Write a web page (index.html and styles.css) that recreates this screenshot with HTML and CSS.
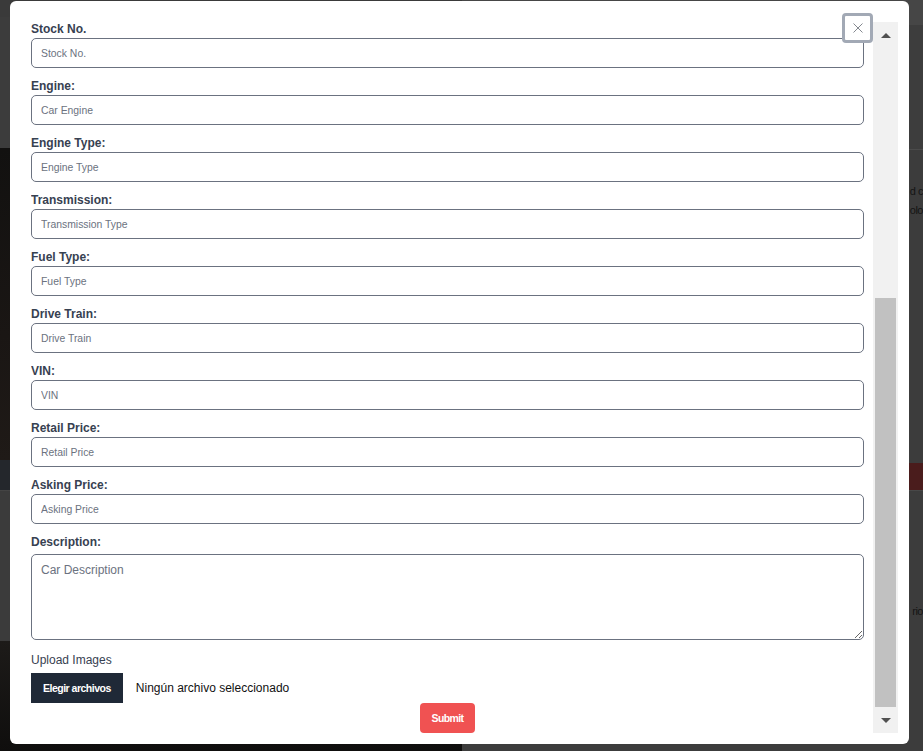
FILE: index.html
```html
<!DOCTYPE html>
<html lang="en">
<head>
<meta charset="utf-8">
<title>Add Car</title>
<link rel="stylesheet" href="styles.css">
</head>
<body>
<div class="page">
  <div class="col-left">
    <div class="l-top"></div>
    <div class="l-photo"></div>
    <div class="l-band"></div>
    <div class="l-grey"></div>
    <div class="l-photo2"></div>
  </div>
  <div class="col-right">
    <div class="r-top"></div>
    <div class="r-nav"></div>
    <div class="r-text">
      <p>d c</p>
      <p>olo</p>
    </div>
    <div class="r-red"></div>
    <div class="r-rest">
      <p>rio</p>
    </div>
  </div>
</div>

<div class="modal">
  <form class="form">
    <div class="field"><label>Stock No.</label><input type="text" placeholder="Stock No."></div>
    <div class="field"><label>Engine:</label><input type="text" placeholder="Car Engine"></div>
    <div class="field"><label>Engine Type:</label><input type="text" placeholder="Engine Type"></div>
    <div class="field"><label>Transmission:</label><input type="text" placeholder="Transmission Type"></div>
    <div class="field"><label>Fuel Type:</label><input type="text" placeholder="Fuel Type"></div>
    <div class="field"><label>Drive Train:</label><input type="text" placeholder="Drive Train"></div>
    <div class="field"><label>VIN:</label><input type="text" placeholder="VIN"></div>
    <div class="field"><label>Retail Price:</label><input type="text" placeholder="Retail Price"></div>
    <div class="field"><label>Asking Price:</label><input type="text" placeholder="Asking Price"></div>
    <div class="field field-desc"><label>Description:</label><textarea placeholder="Car Description"></textarea></div>
    <div class="upload">
      <span class="upload-label">Upload Images</span>
      <div class="file-row">
        <span class="file-btn">Elegir archivos</span>
        <span class="file-name">Ningún archivo seleccionado</span>
      </div>
    </div>
    <div class="actions"><button type="button" class="submit">Submit</button></div>
  </form>
  <div class="scrollbar">
    <div class="sb-arrow sb-up"></div>
    <div class="sb-track"><div class="sb-thumb"></div></div>
    <div class="sb-arrow sb-down"></div>
  </div>
  <button type="button" class="close" aria-label="Close">
    <svg width="10" height="10" viewBox="0 0 10 10"><path d="M0.5 0.5 L9.5 9.5 M9.5 0.5 L0.5 9.5" stroke="#84888f" stroke-width="1" fill="none"/></svg>
  </button>
</div>
</body>
</html>
```

FILE: styles.css
```css
html, body {
  margin: 0;
  padding: 0;
  height: 751px;
  overflow: hidden;
}

body {
  font-family: "Liberation Sans", Arial, sans-serif;
  background: #3d3d3d;
}

/* ---- dimmed page behind the modal ---- */
.page {
  display: grid;
  grid-template-columns: 1fr 1fr;
  height: 751px;
  overflow: hidden;
}

.col-left, .col-right {
  display: flex;
  flex-direction: column;
  overflow: hidden;
}

.l-top {
  height: 148px;
  background: #3c3c3c;
  box-sizing: border-box;
  border-top: 17px solid #3a3a3a;
}
.l-photo {
  height: 312px;
  background: linear-gradient(180deg, #121110 0%, #1a1614 60%, #1f1a17 100%);
}
.l-band {
  height: 30px;
  background: #24272c;
}
.l-grey {
  height: 150px;
  background: #3b3b3b;
  border-top: 1px solid #444;
}
.l-photo2 {
  flex: 1;
  background: linear-gradient(180deg, #1d1b19 0%, #0f0e0d 100%);
}

.r-top {
  height: 25px;
  background: #464646;
}
.r-nav {
  height: 124px;
  background: #3d3d3d;
  border-bottom: 1px solid #4b4b4b;
}
.r-text {
  height: 313px;
  background: #3c3c3c;
  padding-top: 32px;
  box-sizing: border-box;
}
.r-text p, .r-rest p {
  margin: 0;
  text-align: right;
  white-space: nowrap;
  font-size: 11px;
  line-height: 19px;
  letter-spacing: -0.5px;
  color: #141414;
}
.r-red {
  height: 27px;
  background: #4a1c1c;
}
.r-rest {
  flex: 1;
  background: #3c3c3c;
  border-top: 1px solid #484848;
  padding-top: 111px;
  box-sizing: border-box;
}

/* ---- modal ---- */
.modal {
  position: absolute;
  left: 10px;
  top: 1px;
  width: 899px;
  height: 743px;
  box-sizing: border-box;
  padding: 21px 11px 11px 21px;
  background: #fff;
  border-radius: 6px;
  display: flex;
  gap: 9px;
}

.form {
  flex: 1;
  display: flex;
  flex-direction: column;
  overflow: hidden;
  margin: 0;
}

.field {
  margin-bottom: 11px;
}

.field label {
  display: block;
  font-size: 12px;
  line-height: 15px;
  margin-bottom: 1px;
  font-weight: bold;
  color: #374151;
}

.field input {
  display: block;
  width: 100%;
  height: 30px;
  box-sizing: border-box;
  margin: 0;
  padding: 0 9px;
  border: 1px solid #6b7280;
  border-radius: 5px;
  background: #fff;
  font-family: "Liberation Sans", Arial, sans-serif;
  font-size: 10.4px;
  color: #111827;
  outline: none;
}

.field input::placeholder,
.field textarea::placeholder {
  color: #6b7280;
  opacity: 1;
}

.field-desc {
  margin-bottom: 0;
}

.field textarea {
  display: block;
  width: 100%;
  height: 86px;
  box-sizing: border-box;
  margin: 4px 0 0;
  padding: 8px 9px;
  border: 1px solid #6b7280;
  border-radius: 5px;
  font-family: "Liberation Sans", Arial, sans-serif;
  font-size: 12px;
  line-height: 14px;
  color: #111827;
  resize: vertical;
  outline: none;
}

.upload {
  margin-top: 12px;
}

.upload-label {
  display: block;
  font-size: 12px;
  line-height: 17px;
  color: #374151;
  margin-bottom: 4px;
}

.file-row {
  display: flex;
  align-items: center;
  height: 30px;
}

.file-btn {
  display: flex;
  align-items: center;
  justify-content: center;
  height: 30px;
  padding: 0 12px;
  background: #1f2937;
  color: #fff;
  font-size: 10.5px;
  font-weight: bold;
  letter-spacing: -0.5px;
}

.file-name {
  margin-left: 13px;
  font-size: 12px;
  color: #111;
}

.actions {
  display: flex;
  justify-content: center;
}

.submit {
  height: 30px;
  padding: 0 12px;
  border: none;
  border-radius: 4px;
  background: #f05252;
  color: #fff;
  font-family: "Liberation Sans", Arial, sans-serif;
  font-size: 10.5px;
  font-weight: bold;
  letter-spacing: -0.6px;
}

/* fake scrollbar */
.scrollbar {
  width: 25px;
  flex: none;
  background: #f1f1f1;
  display: flex;
  flex-direction: column;
}

.sb-arrow {
  height: 26px;
  display: flex;
  align-items: center;
  justify-content: center;
}

.sb-up::before, .sb-down::before {
  content: "";
  width: 0;
  height: 0;
  border-left: 5px solid transparent;
  border-right: 5px solid transparent;
}

.sb-up::before {
  border-bottom: 5px solid #505050;
}

.sb-down::before {
  border-top: 5px solid #505050;
}

.sb-track {
  flex: 1;
  display: flex;
  flex-direction: column;
  justify-content: flex-end;
  padding: 0 2px;
}

.sb-thumb {
  height: 409px;
  background: #c1c1c1;
}

/* close button */
.close {
  position: absolute;
  left: 832px;
  top: 12px;
  width: 31px;
  height: 30px;
  box-sizing: border-box;
  padding: 0;
  border: 3px solid #a2a9b5;
  border-radius: 4px;
  background: #fff;
  display: flex;
  align-items: center;
  justify-content: center;
}

.close svg {
  display: block;
}
```
